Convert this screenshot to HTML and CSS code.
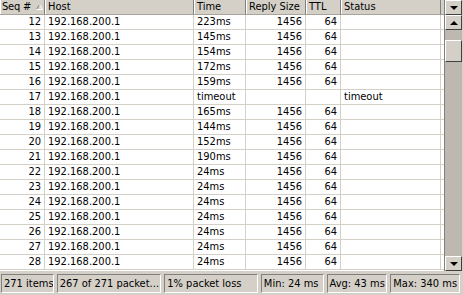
FILE: index.html
```html
<!DOCTYPE html>
<html>
<head>
<meta charset="utf-8">
<link rel="stylesheet" href="styles.css">
</head>
<body>
<div class="window">
  <div class="main">
    <div class="list">
      <div class="row head">
        <div class="hc seq">Seq #<svg class="sort" width="7" height="6" viewBox="0 0 7 6"><path d="M0.5 5.5 L3.5 0.5" stroke="#808080" stroke-width="1" fill="none"/><path d="M3.5 0.5 L6.5 5.5 L0.5 5.5" stroke="#ffffff" stroke-width="1" fill="none"/></svg></div>
        <div class="hc">Host</div>
        <div class="hc">Time</div>
        <div class="hc">Reply Size</div>
        <div class="hc">TTL</div>
        <div class="hc">Status</div>
        <div class="hc fill"></div>
      </div>
      <div class="body" id="body"></div>
    </div>
    <div class="sidebar">
      <div class="hbtn"><span class="tri-down"></span></div>
      <div class="vscroll">
        <div class="sbtn"><span class="tri-up"></span></div>
        <div class="track">
          <div class="track-top"></div>
          <div class="thumb"></div>
          <div class="track-rest"></div>
        </div>
        <div class="sbtn"><span class="tri-down"></span></div>
      </div>
    </div>
  </div>
  <div class="status">
    <div class="panel p1">271 items</div>
    <div class="panel p2">267 of 271 packet...</div>
    <div class="panel p3">1% packet loss</div>
    <div class="panel p4">Min: 24 ms</div>
    <div class="panel p5">Avg: 43 ms</div>
    <div class="panel p6">Max: 340 ms</div>
  </div>
</div>
<script src="app.js"></script>
</body>
</html>
```
FILE: app.js
```js
const data = [
  [12,"223ms"],[13,"145ms"],[14,"154ms"],[15,"172ms"],[16,"159ms"],
  [17,"timeout"],[18,"165ms"],[19,"144ms"],[20,"152ms"],[21,"190ms"],
  [22,"24ms"],[23,"24ms"],[24,"24ms"],[25,"24ms"],[26,"24ms"],[27,"24ms"],[28,"24ms"]
];
const body = document.getElementById("body");
for (const [seq, t] of data) {
  const to = t === "timeout";
  const row = document.createElement("div");
  row.className = "row item";
  const cells = [
    [String(seq), "c r"],
    ["192.168.200.1", "c"],
    [t, "c"],
    [to ? "" : "1456", "c r"],
    [to ? "" : "64", "c r"],
    [to ? "timeout" : "", "c"],
    ["", "c fill"]
  ];
  for (const [txt, cls] of cells) {
    const d = document.createElement("div");
    d.className = cls;
    d.textContent = txt;
    row.appendChild(d);
  }
  body.appendChild(row);
}
```
FILE: styles.css
```css
html, body {
  margin: 0;
  padding: 0;
  background: #d4d0c8;
}
body {
  font-family: "DejaVu Sans Condensed", "DejaVu Sans", sans-serif;
  font-size: 11px;
  color: #000;
}
.window {
  width: 463px;
  height: 295px;
  display: flex;
  flex-direction: column;
}
.main {
  height: 271px;
  display: flex;
  background: #fff;
}
.list {
  width: 444px;
  display: flex;
  flex-direction: column;
}
.row {
  display: grid;
  grid-template-columns: 45px 149px 52px 60px 35px 100px 3px;
  height: 15px;
}
.head {
  background: #d4d0c8;
}
.hc {
  box-sizing: border-box;
  border-right: 1px solid #808080;
  border-bottom: 1px solid #a8a49c;
  box-shadow: inset 1px 0 0 #fff;
  padding-left: 3px;
  line-height: 14px;
  white-space: nowrap;
  overflow: hidden;
  position: relative;
}
.hc.seq {
  padding-left: 2px;
  letter-spacing: -0.2px;
}
.hc.fill {
  border-right: none;
  box-shadow: none;
}
.sort {
  position: absolute;
  left: 36px;
  top: 4px;
}
.item .c {
  box-sizing: border-box;
  border-right: 1px solid #d4d0c8;
  border-bottom: 1px solid #d4d0c8;
  padding: 0 3px;
  line-height: 14px;
  white-space: nowrap;
  overflow: hidden;
}
.item .c.fill {
  border-right: none;
  padding: 0;
}
.item .c.r {
  text-align: right;
}
.sidebar {
  width: 19px;
  display: flex;
  flex-direction: column;
  background: #d4d0c8;
  border-left: 1px solid #808080;
  box-sizing: border-box;
}
.hbtn, .sbtn {
  height: 15px;
  box-sizing: border-box;
  background: #d4d0c8;
  border-top: 1px solid #fff;
  border-left: 1px solid #fff;
  border-right: 1px solid #404040;
  border-bottom: 1px solid #404040;
  display: flex;
  align-items: center;
  justify-content: center;
  width: 17px;
}
.vscroll {
  flex: 1;
  display: flex;
  flex-direction: column;
}
.track {
  flex: 1;
  display: flex;
  flex-direction: column;
  width: 17px;
}
.track-top {
  height: 10px;
  background: #bdb9b1;
}
.thumb {
  height: 22px;
  box-sizing: border-box;
  background: #d4d0c8;
  border-top: 1px solid #fff;
  border-left: 1px solid #fff;
  border-right: 1px solid #404040;
  border-bottom: 1px solid #404040;
}
.track-rest {
  flex: 1;
  background: #bdb9b1;
}
.tri-down {
  width: 0;
  height: 0;
  border-left: 4px solid transparent;
  border-right: 4px solid transparent;
  border-top: 4px solid #000;
}
.tri-up {
  width: 0;
  height: 0;
  border-left: 4px solid transparent;
  border-right: 4px solid transparent;
  border-bottom: 4px solid #000;
}
.status {
  height: 24px;
  display: flex;
  align-items: center;
  gap: 3px;
  padding: 0 3px 0 1px;
  background: #d4d0c8;
}
.panel {
  box-sizing: border-box;
  height: 19px;
  border-top: 1px solid #808080;
  border-left: 1px solid #808080;
  border-right: 1px solid #fff;
  border-bottom: 1px solid #fff;
  padding-left: 2px;
  line-height: 17px;
  white-space: nowrap;
  overflow: hidden;
}
.p1 { width: 53px; }
.p2 { width: 105px; }
.p3 { width: 94px; }
.p4 { width: 63px; }
.p5 { width: 61px; }
.p6 { width: 70px; }
```
